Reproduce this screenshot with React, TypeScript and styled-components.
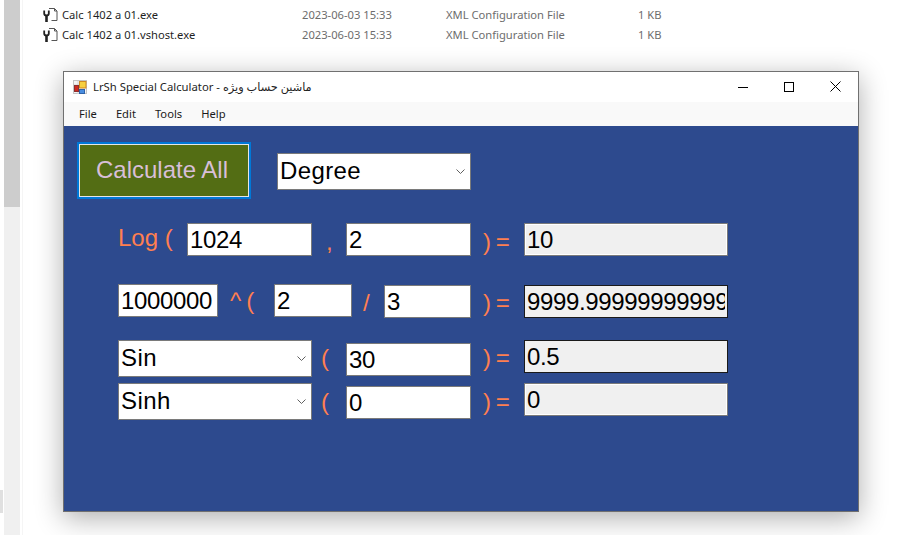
import React from "react";
import styled, { createGlobalStyle } from "styled-components";

const Global = createGlobalStyle`
  html, body { margin: 0; padding: 0; background: #fff; }
  body { font-family: "Noto Sans", "Liberation Sans", sans-serif; }
`;

const Desktop = styled.div`
  position: relative;
  width: 909px;
  height: 535px;
  overflow: hidden;
  background: #fff;
  display: flex;
`;

const EdgeColumn = styled.div`
  width: 4px;
  display: flex;
  flex-direction: column;
  padding-top: 490px;
`;
const EdgeThumb = styled.div`
  height: 23px;
  width: 3px;
  background: #e0e0e0;
`;
const ScrollTrack = styled.div`
  width: 16px;
  height: 535px;
  background: #f0f0f0;
`;
const ScrollThumb = styled.div`
  height: 207px;
  background: #cdcdcd;
`;
const Divider = styled.div`
  width: 1px;
  margin-left: 2px;
  background: #f5f5f5;
`;

const FileList = styled.div`
  padding: 5px 0 0 20px;
`;
const FileRow = styled.div`
  display: grid;
  grid-template-columns: 19px 240px 144px 192px auto;
  align-items: center;
  height: 20px;
  font-size: 11.2px;
  line-height: 18px;
  color: #6d6d6d;
  white-space: nowrap;
`;
const FileName = styled.span`
  color: #1f1f1f;
`;

const Window = styled.div`
  position: absolute;
  left: 63px;
  top: 71px;
  width: 794px;
  height: 439px;
  border: 1px solid #707070;
  display: flex;
  flex-direction: column;
  background: #fff;
  box-shadow: 0 6px 26px rgba(0, 0, 0, 0.32);
`;
const TitleBar = styled.div`
  height: 30px;
  display: flex;
  align-items: center;
  padding-left: 9px;
  background: #fff;
`;
const TitleText = styled.span`
  margin-left: 5px;
  padding-bottom: 2px;
  font-size: 11.3px;
  color: #1f1f1f;
  flex: 1;
  white-space: nowrap;
  font-family: "Noto Sans", "DejaVu Sans", sans-serif;
`;
const CaptionButton = styled.div`
  width: 46px;
  height: 30px;
  display: flex;
  align-items: center;
  justify-content: center;
  padding-bottom: 1px;
  box-sizing: border-box;
`;
const MenuBar = styled.div`
  height: 24px;
  display: flex;
  align-items: center;
  background: #f9f9f9;
  padding: 0 0 2px 15px;
  box-sizing: border-box;
  gap: 19px;
  font-size: 11.2px;
  color: #1a1a1a;
`;
const Client = styled.div`
  flex: 1;
  background: #2d4a8e;
  padding: 16px 0 0 13px;
  font-family: "Liberation Sans", Arial, sans-serif;
  font-size: 24px;
`;
const TopRow = styled.div`
  display: flex;
  align-items: flex-start;
`;
const CalcButton = styled.div`
  box-sizing: border-box;
  width: 170px;
  height: 53px;
  background: #536d14;
  border: 1px solid #e6e6e6;
  outline: 2px solid #0078d7;
  margin: 2px;
  padding: 0 4px 2px 0;
  display: flex;
  align-items: center;
  justify-content: center;
  color: #d8bfd8;
`;
const Row = styled.div<{ $top: number }>`
  display: flex;
  align-items: flex-start;
  margin-top: ${(p) => p.$top}px;
  padding-left: 41px;
`;
const Combo = styled.div<{ $w: number; $left?: number; $dy?: number }>`
  box-sizing: border-box;
  width: ${(p) => p.$w}px;
  height: 37px;
  margin-left: ${(p) => p.$left ?? 0}px;
  margin-top: ${(p) => p.$dy ?? 0}px;
  background: #fff;
  border: 1px solid #7a7a7a;
  padding: 0 5px 2px 2px;
  display: flex;
  align-items: center;
  justify-content: space-between;
  color: #000;
`;
const ComboText = styled.span`
  letter-spacing: 0.4px;
`;
const ComboArrow = styled.span`
  display: flex;
  padding-top: 2px;
`;
const Field = styled.div<{ $w: number; $left?: number; $dy?: number }>`
  box-sizing: border-box;
  width: ${(p) => p.$w}px;
  height: 33px;
  margin-left: ${(p) => p.$left ?? 0}px;
  margin-top: ${(p) => p.$dy ?? 0}px;
  background: #fff;
  border: 1px solid #7a7a7a;
  padding: 1px 2px 0 2px;
  line-height: 30px;
  letter-spacing: -0.35px;
  color: #000;
  white-space: nowrap;
`;
const Output = styled(Field)<{ $active?: boolean }>`
  background: #f0f0f0;
  border-color: ${(p) => (p.$active ? "#1a1a1a" : "#7a7a7a")};
  box-shadow: ${(p) => (p.$active ? "none" : "inset 0 0 0 1px #fff")};
`;
const OutputValue = styled.div`
  overflow: hidden;
`;
const Label = styled.div<{ $w: number; $dy: number; $x?: number }>`
  box-sizing: border-box;
  width: ${(p) => p.$w}px;
  padding-left: ${(p) => p.$x ?? 0}px;
  margin-top: ${(p) => p.$dy}px;
  height: 28px;
  line-height: 28px;
  color: #ff7f50;
  white-space: nowrap;
`;
const TightLabel = styled(Label)`
  letter-spacing: -0.9px;
`;

const Chevron = () => (
  <svg width="9" height="5" viewBox="0 0 9 5" fill="none">
    <path d="M0.5 0.5 L4.5 4.5 L8.5 0.5" stroke="#606060" strokeWidth="1" />
  </svg>
);

const FileIcon = () => (
  <svg width="16" height="16" viewBox="0 0 16 16" fill="none">
    <path d="M6 1.5 H11.5 L14 4 V13.5 H8.5" stroke="#555" strokeWidth="1" />
    <path d="M11.5 1.5 V4 H14" stroke="#555" strokeWidth="1" />
    <path d="M1.2 3.5 V6.5 Q1.2 8.5 3.5 8.5 Q5.8 8.5 5.8 6.5 V3.5" stroke="#222" strokeWidth="1.8" />
    <path d="M3.5 8 V15" stroke="#222" strokeWidth="2.6" />
  </svg>
);

const AppIcon = () => (
  <svg width="15" height="15" viewBox="0 0 15 15">
    <rect x="0.5" y="0.5" width="13" height="13" fill="#f4f4f4" stroke="#c4c4c4" />
    <path d="M5 1 V14 M1 5 H14" stroke="#d6d6d6" />
    <rect x="6.5" y="1.5" width="6.5" height="6.5" fill="#f6d040" stroke="#d08a20" />
    <rect x="1.5" y="5.5" width="4" height="6" fill="#d02a20" stroke="#8c3030" />
    <rect x="6.5" y="9.5" width="5" height="4" fill="#4a8ee0" stroke="#2f62a8" />
  </svg>
);

const files = ["Calc 1402 a 01.exe", "Calc 1402 a 01.vshost.exe"];

export default function App() {
  return (
    <>
      <Global />
      <Desktop>
        <EdgeColumn>
          <EdgeThumb />
        </EdgeColumn>
        <ScrollTrack>
          <ScrollThumb />
        </ScrollTrack>
        <Divider />
        <FileList>
          {files.map((f) => (
            <FileRow key={f}>
              <FileIcon />
              <FileName>{f}</FileName>
              <span>2023-06-03 15:33</span>
              <span>XML Configuration File</span>
              <span>1 KB</span>
            </FileRow>
          ))}
        </FileList>
        <Window>
          <TitleBar>
            <AppIcon />
            <TitleText>LrSh Special Calculator - ماشین حساب ویژه</TitleText>
            <CaptionButton>
              <svg width="10" height="10" viewBox="0 0 10 10"><path d="M0 5.5 H10" stroke="#000" /></svg>
            </CaptionButton>
            <CaptionButton>
              <svg width="10" height="10" viewBox="0 0 10 10"><rect x="0.5" y="0.5" width="9" height="9" fill="none" stroke="#000" /></svg>
            </CaptionButton>
            <CaptionButton>
              <svg width="11" height="11" viewBox="0 0 11 11"><path d="M0.5 0.5 L10.5 10.5 M10.5 0.5 L0.5 10.5" stroke="#000" /></svg>
            </CaptionButton>
          </TitleBar>
          <MenuBar>
            <span>File</span>
            <span>Edit</span>
            <span>Tools</span>
            <span>Help</span>
          </MenuBar>
          <Client>
            <TopRow>
              <CalcButton>Calculate All</CalcButton>
              <Combo $w={194} $left={26} $dy={11}>
                <ComboText>Degree</ComboText>
                <ComboArrow><Chevron /></ComboArrow>
              </Combo>
            </TopRow>
            <Row $top={24}>
              <Label $w={69} $dy={1}>Log (</Label>
              <Field $w={125}>1024</Field>
              <Label $w={34} $dy={5} $x={14}>,</Label>
              <Field $w={125}>2</Field>
              <TightLabel $w={53} $dy={5} $x={12}>) =</TightLabel>
              <Output $w={204}>10</Output>
            </Row>
            <Row $top={28}>
              <Field $w={100}>1000000</Field>
              <TightLabel $w={56} $dy={3} $x={12}>^ (</TightLabel>
              <Field $w={78}>2</Field>
              <Label $w={32} $dy={5} $x={11}>/</Label>
              <Field $w={87} $dy={1}>3</Field>
              <TightLabel $w={53} $dy={5} $x={12}>) =</TightLabel>
              <Output $w={204} $dy={1} $active>
                <OutputValue>9999.99999999999</OutputValue>
              </Output>
            </Row>
            <Row $top={22}>
              <Combo $w={194}>
                <ComboText>Sin</ComboText>
                <ComboArrow><Chevron /></ComboArrow>
              </Combo>
              <Label $w={34} $dy={4} $x={9}>(</Label>
              <Field $w={125} $dy={3}>30</Field>
              <TightLabel $w={53} $dy={4} $x={12}>) =</TightLabel>
              <Output $w={204} $active>0.5</Output>
            </Row>
            <Row $top={6}>
              <Combo $w={194}>
                <ComboText>Sinh</ComboText>
                <ComboArrow><Chevron /></ComboArrow>
              </Combo>
              <Label $w={34} $dy={5} $x={9}>(</Label>
              <Field $w={125} $dy={3}>0</Field>
              <TightLabel $w={53} $dy={5} $x={12}>) =</TightLabel>
              <Output $w={204}>0</Output>
            </Row>
          </Client>
        </Window>
      </Desktop>
    </>
  );
}
